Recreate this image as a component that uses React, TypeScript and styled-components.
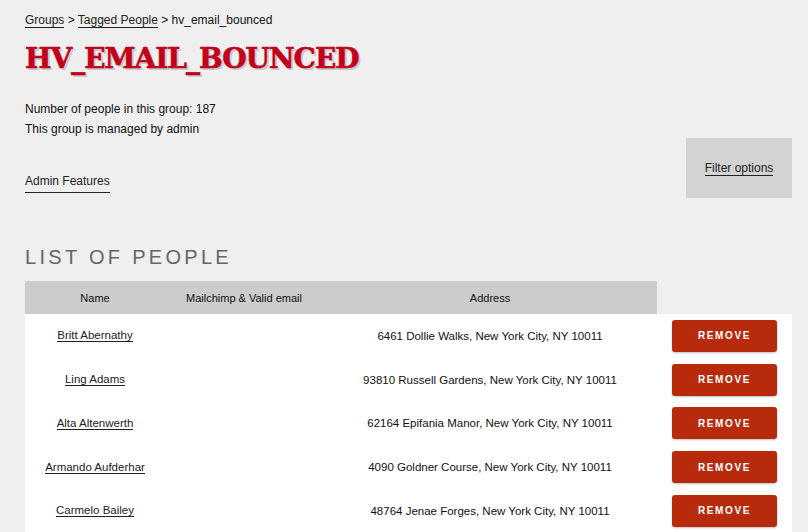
import React from 'react';
import styled, {createGlobalStyle} from 'styled-components';

const GlobalStyle = createGlobalStyle`
	html, body {
		margin: 0;
		padding: 0;
		background: #efefef;
		font-family: 'Liberation Sans', Arial, sans-serif;
		color: #111;
	}
`;

type Person = {
	name: string;
	address: string;
};

const people: Person[] = [
	{name: 'Britt Abernathy', address: '6461 Dollie Walks, New York City, NY 10011'},
	{name: 'Ling Adams', address: '93810 Russell Gardens, New York City, NY 10011'},
	{name: 'Alta Altenwerth', address: '62164 Epifania Manor, New York City, NY 10011'},
	{name: 'Armando Aufderhar', address: '4090 Goldner Course, New York City, NY 10011'},
	{name: 'Carmelo Bailey', address: '48764 Jenae Forges, New York City, NY 10011'},
];

const Page = styled.div`
	padding: 12px 16px 0 25px;
`;

const Top = styled.div`
	display: flex;
	justify-content: space-between;
	align-items: flex-end;
`;

const Intro = styled.div`
	display: flex;
	flex-direction: column;
	align-items: flex-start;
`;

const Crumbs = styled.div`
	font-size: 12px;
	line-height: 16px;
`;

const Link = styled.a`
	color: #222;
	text-decoration: none;
	border-bottom: 1px solid #222;
`;

const Title = styled.h1`
	margin: 14px 0 0;
	font-family: 'DejaVu Serif', 'Liberation Serif', serif;
	font-weight: bold;
	font-size: 28px;
	line-height: 34px;
	letter-spacing: -1px;
	color: #c3001b;
	-webkit-text-stroke: 0.6px #c3001b;
	text-shadow: 2px 2px 0 #c9c9c9;
`;

const Info = styled.p`
	margin: 0;
	font-size: 12px;
	line-height: 20px;
	&:first-of-type {
		margin-top: 23px;
	}
`;

const AdminLink = styled(Link)`
	margin-top: 34px;
	margin-bottom: 5px;
	font-size: 12px;
	line-height: 16px;
	padding-bottom: 3px;
`;

const FilterBox = styled.div`
	width: 106px;
	height: 60px;
	background: #d3d3d3;
	display: flex;
	align-items: center;
	justify-content: center;
	font-size: 12px;
`;

const Heading = styled.h2`
	margin: 47px 0 12px;
	font-weight: normal;
	font-size: 20px;
	line-height: 24px;
	letter-spacing: 3.3px;
	color: #666;
`;

const Grid = styled.div`
	display: grid;
	grid-template-columns: 140px 158px 334px 135px;
	font-size: 11.5px;
`;

const HeadCell = styled.div<{$blank?: boolean}>`
	height: 33px;
	display: flex;
	align-items: center;
	justify-content: center;
	font-size: 11px;
	background: ${p => (p.$blank ? 'transparent' : '#cccccc')};
`;

const Cell = styled.div`
	height: 43.75px;
	display: flex;
	align-items: center;
	justify-content: center;
	background: #fff;
	text-align: center;
`;

const RemoveButton = styled.button`
	width: 105px;
	height: 32px;
	border: none;
	border-radius: 3px;
	background: #b72b0c;
	color: #fff;
	font-family: 'Liberation Sans', Arial, sans-serif;
	font-weight: bold;
	font-size: 10px;
	letter-spacing: 1.6px;
	box-shadow: 0 1px 2px rgba(0, 0, 0, 0.25);
	cursor: pointer;
`;

const App = () => (
	<Page>
		<GlobalStyle />
		<Top>
			<Intro>
				<Crumbs>
					<Link href='#'>Groups</Link> &gt; <Link href='#'>Tagged People</Link> &gt; hv_email_bounced
				</Crumbs>
				<Title>HV_EMAIL_BOUNCED</Title>
				<Info>Number of people in this group: 187</Info>
				<Info>This group is managed by admin</Info>
				<AdminLink href='#'>Admin Features</AdminLink>
			</Intro>
			<FilterBox>
				<Link href='#'>Filter options</Link>
			</FilterBox>
		</Top>

		<Heading>LIST OF PEOPLE</Heading>

		<Grid>
			<HeadCell>Name</HeadCell>
			<HeadCell>Mailchimp &amp; Valid email</HeadCell>
			<HeadCell>Address</HeadCell>
			<HeadCell $blank />
			{people.map(person => (
				<React.Fragment key={person.name}>
					<Cell><Link href='#'>{person.name}</Link></Cell>
					<Cell />
					<Cell>{person.address}</Cell>
					<Cell><RemoveButton type='button'>REMOVE</RemoveButton></Cell>
				</React.Fragment>
			))}
		</Grid>
	</Page>
);

export default App;
